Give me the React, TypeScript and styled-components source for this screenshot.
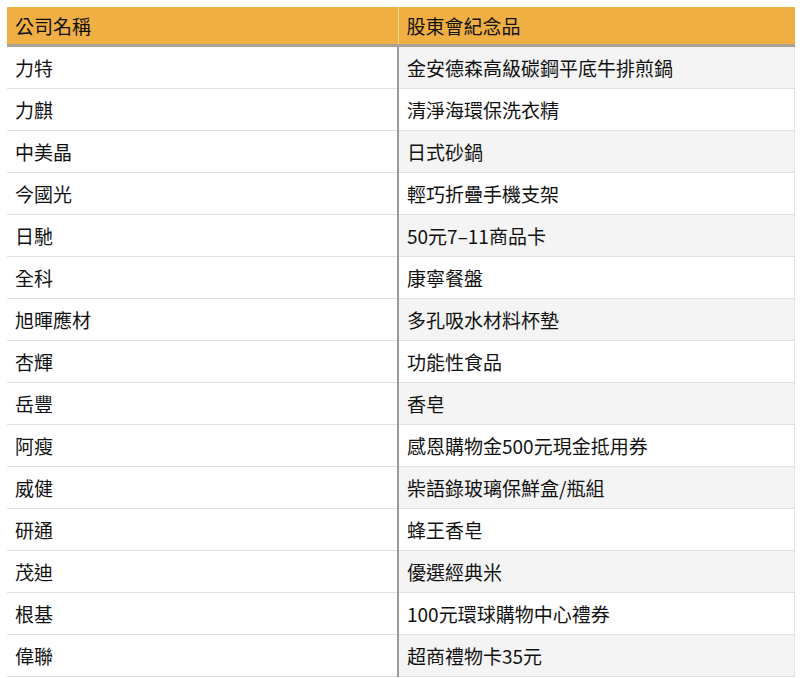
import styled, { createGlobalStyle } from "styled-components";

const Global = createGlobalStyle`
  body {
    margin: 0;
    background: #fff;
    font-family: "Noto Sans CJK TC", "Liberation Sans", sans-serif;
  }
`;

const Page = styled.div`
  padding: 7px 5px 0 7px;
`;

const Table = styled.table`
  width: 788px;
  border-collapse: collapse;
  table-layout: fixed;
  font-size: 19px;
  color: #111;
`;

const Th = styled.th<{ $second?: boolean }>`
  background: #f0af42;
  height: 37px;
  padding: 0 8px;
  text-align: left;
  font-weight: 400;
  border-bottom: 3px solid #a8a196;
  border-left: ${({ $second }) => ($second ? "1px solid #f7d79a" : "none")};
`;

const Td = styled.td<{ $second?: boolean; $shade?: boolean }>`
  height: 41px;
  padding: 0 8px;
  border-bottom: 1px solid #dedede;
  background: ${({ $second, $shade }) => ($second && $shade ? "#f4f4f4" : "#fff")};
  border-left: ${({ $second }) => ($second ? "2px solid #9a9a9a" : "none")};
  border-right: ${({ $second }) => ($second ? "1px solid #e5e5e5" : "none")};
`;

const rows = [
  ["力特", "金安德森高級碳鋼平底牛排煎鍋"],
  ["力麒", "清淨海環保洗衣精"],
  ["中美晶", "日式砂鍋"],
  ["今國光", "輕巧折疊手機支架"],
  ["日馳", "50元7–11商品卡"],
  ["全科", "康寧餐盤"],
  ["旭暉應材", "多孔吸水材料杯墊"],
  ["杏輝", "功能性食品"],
  ["岳豐", "香皂"],
  ["阿瘦", "感恩購物金500元現金抵用券"],
  ["威健", "柴語錄玻璃保鮮盒/瓶組"],
  ["研通", "蜂王香皂"],
  ["茂迪", "優選經典米"],
  ["根基", "100元環球購物中心禮券"],
  ["偉聯", "超商禮物卡35元"],
];

export default function App() {
  return (
    <Page>
      <Global />
      <Table>
        <colgroup>
          <col style={{ width: 391 }} />
          <col />
        </colgroup>
        <thead>
          <tr>
            <Th>公司名稱</Th>
            <Th $second>股東會紀念品</Th>
          </tr>
        </thead>
        <tbody>
          {rows.map(([a, b], i) => (
            <tr key={a}>
              <Td>{a}</Td>
              <Td $second $shade={i % 2 === 0}>{b}</Td>
            </tr>
          ))}
        </tbody>
      </Table>
    </Page>
  );
}
